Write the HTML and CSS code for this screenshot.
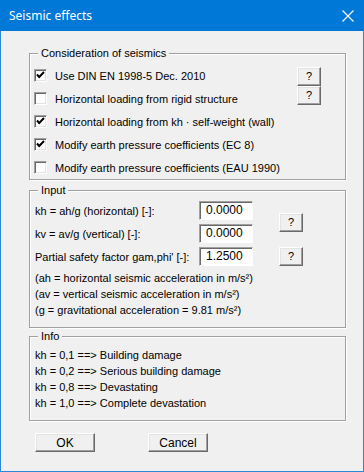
FILE: index.html
```html
<!DOCTYPE html>
<html lang="en">
<head>
	<meta charset="UTF-8">
	<title>Seismic effects</title>
	<link rel="stylesheet" href="styles.css">
</head>
<body>
	<div class="window">
		<div class="titlebar">
			<span class="title">Seismic effects</span>
			<svg class="close" width="12" height="12" viewBox="0 0 12 12"><path d="M0.5 0.5 L11.5 11.5 M11.5 0.5 L0.5 11.5" stroke="#fff" stroke-width="1.1" fill="none"/></svg>
		</div>
		<div class="content">
			<!-- Consideration of seismics -->
			<div class="group">
				<div class="legend">Consideration of seismics</div>
				<div class="seismics-body">
					<div class="checklist">
						<div class="check-row"><span class="checkbox"><svg width="9" height="9" viewBox="0 0 9 9"><path d="M1 3.5 L3.2 6 L8 1" stroke="#000" stroke-width="2" fill="none"/></svg></span>Use DIN EN 1998-5 Dec. 2010</div>
						<div class="check-row"><span class="checkbox"></span>Horizontal loading from rigid structure</div>
						<div class="check-row"><span class="checkbox"><svg width="9" height="9" viewBox="0 0 9 9"><path d="M1 3.5 L3.2 6 L8 1" stroke="#000" stroke-width="2" fill="none"/></svg></span>Horizontal loading from kh · self-weight (wall)</div>
						<div class="check-row"><span class="checkbox"><svg width="9" height="9" viewBox="0 0 9 9"><path d="M1 3.5 L3.2 6 L8 1" stroke="#000" stroke-width="2" fill="none"/></svg></span>Modify earth pressure coefficients (EC 8)</div>
						<div class="check-row"><span class="checkbox"></span>Modify earth pressure coefficients (EAU 1990)</div>
					</div>
					<div class="help-col">
						<button class="btn btn-help">?</button>
						<button class="btn btn-help">?</button>
					</div>
				</div>
			</div>

			<!-- Input -->
			<div class="group group-input">
				<div class="legend">Input</div>
				<div class="input-grid">
					<div class="field-label">kh = ah/g (horizontal) [-]:</div>
					<div class="field">0.0000</div>
					<button class="btn btn-help help-span">?</button>
					<div class="field-label">kv = av/g (vertical) [-]:</div>
					<div class="field">0.0000</div>
					<div class="field-label">Partial safety factor gam,phi' [-]:</div>
					<div class="field">1.2500</div>
					<button class="btn btn-help">?</button>
				</div>
				<div class="notes">
					<p>(ah = horizontal seismic acceleration in m/s²)</p>
					<p>(av = vertical seismic acceleration in m/s²)</p>
					<p>(g = gravitational acceleration = 9.81 m/s²)</p>
				</div>
			</div>

			<!-- Info -->
			<div class="group group-info">
				<div class="legend">Info</div>
				<div class="notes">
					<p>kh = 0,1 ==&gt; Building damage</p>
					<p>kh = 0,2 ==&gt; Serious building damage</p>
					<p>kh = 0,8 ==&gt; Devastating</p>
					<p>kh = 1,0 ==&gt; Complete devastation</p>
				</div>
			</div>

			<div class="actions">
				<button class="btn btn-main btn-default">OK</button>
				<button class="btn btn-main">Cancel</button>
			</div>
		</div>
	</div>
</body>
</html>
```

FILE: styles.css
```css
* {
	margin: 0;
	padding: 0;
	box-sizing: border-box;
}
body {
	font-family: "Liberation Sans", Arial, sans-serif;
	font-size: 11px;
	color: #000;
	background: #fff;
}
.window {
	width: 364px;
	height: 472px;
	border: 1px solid #2b87d8;
	border-top: none;
	background: #f0f0f0;
}
/*标题栏*/
.titlebar {
	height: 31px;
	background: #0078d7;
	display: flex;
	align-items: center;
	justify-content: space-between;
	padding: 0 9px 0 9px;
	margin: 0 -1px;
}
.titlebar .title {
	color: #fff;
	font-size: 12px;
	font-family: "Noto Sans", "Liberation Sans", sans-serif;
	padding-bottom: 1px;
}
.titlebar .close {
	display: block;
	margin-right: 1px;
}
.content {
	padding: 22px 17px 0 28px;
}
/*分组框*/
.group {
	border: 1px solid #a0a0a0;
	box-shadow: inset 1px 1px 0 #fff, 1px 1px 0 #fff;
}
.group + .group {
	margin-top: 10px;
}
.group-info {
	margin-top: 8px !important;
	padding-bottom: 9px;
}
.legend {
	width: fit-content;
	margin: -7px 0 0 8px;
	padding: 0 3px;
	line-height: 13px;
	background: #f0f0f0;
}
.seismics-body {
	display: flex;
	padding-top: 4px;
}
.checklist {
	flex: 1;
}
.check-row {
	display: flex;
	align-items: center;
	height: 23px;
	padding-left: 4px;
}
.checkbox {
	width: 13px;
	height: 13px;
	margin-right: 8px;
	background: #fff;
	border: 1px solid;
	border-color: #a0a0a0 #fff #fff #a0a0a0;
	box-shadow: inset 1px 1px 0 #696969, inset -1px -1px 0 #e3e3e3;
	display: flex;
	align-items: center;
	justify-content: center;
}
.checkbox svg {
	display: block;
}
.help-col {
	display: flex;
	flex-direction: column;
	padding-top: 3px;
	margin-right: 24px;
}
/*按钮*/
.btn {
	font-family: "Liberation Sans", Arial, sans-serif;
	font-size: 11px;
	color: #000;
	background: #f0f0f0;
	border: 1px solid;
	border-color: #fff #696969 #696969 #fff;
	box-shadow: inset -1px -1px 0 #a0a0a0, inset 1px 1px 0 #e3e3e3;
	cursor: pointer;
}
.btn-help {
	width: 24px;
	height: 19px;
	line-height: 15px;
}
.btn-main {
	width: 60px;
	height: 19px;
	font-size: 12px;
}
.actions {
	display: flex;
	gap: 53px;
	margin-top: 12px;
	padding-left: 6px;
}
/*输入区*/
.input-grid {
	display: grid;
	grid-template-columns: 164px 54px 50px;
	grid-auto-rows: 23px;
	margin-top: 2px;
	padding-left: 5px;
	align-items: center;
}
.input-grid .btn-help {
	justify-self: end;
}
.field {
	height: 19px;
	line-height: 17px;
	padding-left: 6px;
	background: #fff;
	border: 1px solid;
	border-color: #a0a0a0 #fff #fff #a0a0a0;
	box-shadow: inset 1px 1px 0 #696969;
	font-size: 12px;
}
.help-span {
	grid-column: 3;
	grid-row: 1 / span 2;
}
.notes {
	padding-left: 5px;
	margin-top: 2px;
}
.group-input {
	padding-bottom: 9px;
}
.group-info .notes {
	margin-top: 4px;
}
.notes p {
	line-height: 16px;
}
```
